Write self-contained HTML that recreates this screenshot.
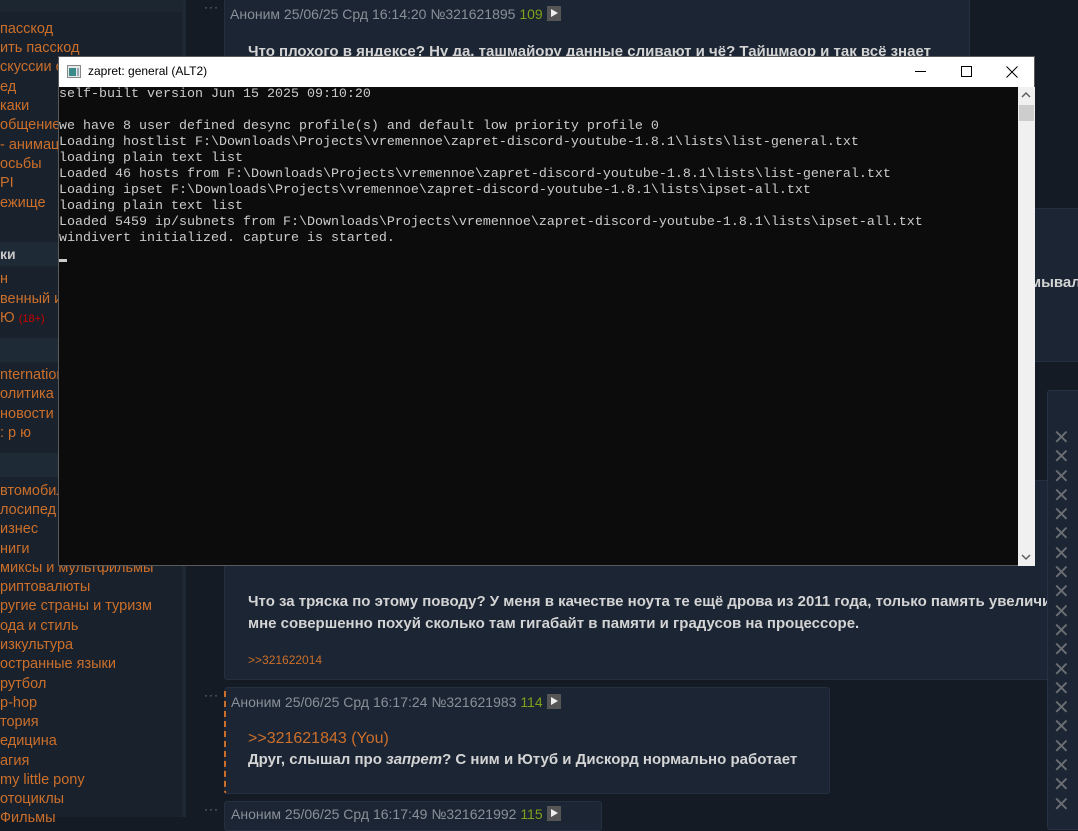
<!DOCTYPE html>
<html><head><meta charset="utf-8"><style>
*{margin:0;padding:0;box-sizing:border-box}
body{width:1078px;height:817px;overflow:hidden;background:#141b24;font-family:"Liberation Sans","DejaVu Sans",sans-serif;position:relative}
.abs{position:absolute}
.side{left:0;top:0;width:186px;height:817px;background:#18212c;border-right:4px solid #1e2834}
.side .it{position:absolute;left:0;font-size:14.5px;color:#cc6f2a;white-space:nowrap;line-height:19px}
.band{position:absolute;left:0;width:182px;height:24px;background:#1f2a37;color:#c8c8c8;font-size:14px;font-weight:bold;line-height:24px}
.post{position:absolute;background:#1b2533;border:1px solid #243040;border-radius:3px}
.hdr{position:absolute;font-size:14px;color:#8a9099;white-space:nowrap}
.hdr .n{color:#7ea21a}
.hdr .pl{display:inline-block;width:14px;height:15px;background:#555;vertical-align:-2px;margin-left:4px;position:relative}
.hdr .pl:after{content:"";position:absolute;left:4px;top:3px;border-left:7px solid #eee;border-top:4.5px solid transparent;border-bottom:4.5px solid transparent}
.txt{position:absolute;font-size:15px;font-weight:bold;color:#d4d4d4;white-space:nowrap;line-height:24px}
.or{color:#cc6f2a}
.dots{position:absolute;color:#7a808a;font-size:12px;letter-spacing:1px}
.win{left:58px;top:56px;width:977px;height:510px;background:#0c0c0c;border:1px solid #5a5a5a}
.tb{position:absolute;left:0;top:0;width:100%;height:30px;background:#fff;font-size:12px;color:#000}
.con{position:absolute;left:0;top:30px;font-family:"Liberation Mono","DejaVu Sans Mono",monospace;font-size:13.33px;line-height:16px;color:#cccccc;white-space:pre}
.x{position:absolute;left:1053px;color:#6a6d72;font-size:20px;font-weight:bold;line-height:19.3px;font-family:"DejaVu Sans",sans-serif}
</style></head><body>
<div class="abs side">
<div class="abs" style="left:0;top:0;width:182px;height:12px;background:#1c2631"></div>
<div class="it" style="top:20px">пасскод</div>
<div class="it" style="top:39px">ить пасскод</div>
<div class="it" style="top:58px">скуссии о</div>
<div class="it" style="top:78px">ед</div>
<div class="it" style="top:97px">каки</div>
<div class="it" style="top:116px">общение</div>
<div class="it" style="top:136px">- анимации</div>
<div class="it" style="top:155px">осьбы</div>
<div class="it" style="top:174px">PI</div>
<div class="it" style="top:194px">ежище</div>
<div class="band" style="top:242px">ки</div>
<div class="it" style="top:270px">н</div>
<div class="it" style="top:290px">венный и</div>
<div class="it" style="top:309px">Ю <span style="color:#c00;font-size:11px">(18+)</span></div>
<div class="band" style="top:338px"></div>
<div class="it" style="top:366px">nternation</div>
<div class="it" style="top:385px">олитика</div>
<div class="it" style="top:405px"> новости</div>
<div class="it" style="top:424px">: р ю</div>
<div class="band" style="top:453px"></div>
<div class="it" style="top:482px">втомобил</div>
<div class="it" style="top:501px">лосипед</div>
<div class="it" style="top:520px">изнес</div>
<div class="it" style="top:540px">ниги</div>
<div class="it" style="top:559px">миксы и мультфильмы</div>
<div class="it" style="top:578px">риптовалюты</div>
<div class="it" style="top:597px">ругие страны и туризм</div>
<div class="it" style="top:617px">ода и стиль</div>
<div class="it" style="top:636px">изкультура</div>
<div class="it" style="top:655px">остранные языки</div>
<div class="it" style="top:675px">рутбол</div>
<div class="it" style="top:694px">p-hop</div>
<div class="it" style="top:713px">тория</div>
<div class="it" style="top:732px">едицина</div>
<div class="it" style="top:752px">агия</div>
<div class="it" style="top:771px">my little pony</div>
<div class="it" style="top:790px">отоциклы</div>
<div class="it" style="top:809px">Фильмы</div>
</div>

<div class="post" style="left:224px;top:-4px;width:746px;height:210px"></div>
<div class="dots" style="left:204px;top:0px">···</div>
<div class="hdr" style="left:230px;top:6px">Аноним 25/06/25 Срд 16:14:20 №321621895 <span class="n">109</span><span class="pl"></span></div>
<div class="txt" style="left:248px;top:40px">Что плохого в яндексе? Ну да, ташмайору данные сливают и чё? Тайщмаор и так всё знает</div>

<div class="post" style="left:210px;top:208px;width:880px;height:154px"></div>
<div class="txt" style="left:1030px;top:271px">мывал</div>

<div class="post" style="left:224px;top:480px;width:870px;height:200px"></div>
<div class="txt" style="left:248px;top:590px">Что за тряска по этому поводу? У меня в качестве ноута те ещё дрова из 2011 года, только память увеличил</div>
<div class="txt" style="left:248px;top:612px">мне совершенно похуй сколько там гигабайт в памяти и градусов на процессоре.</div>
<div class="abs or" style="left:248px;top:653px;font-size:12px">&gt;&gt;321622014</div>

<div class="post" style="left:224px;top:687px;width:606px;height:107px;border-left:2px dashed #cc6f2a"></div>
<div class="dots" style="left:204px;top:688px">···</div>
<div class="hdr" style="left:231px;top:694px">Аноним 25/06/25 Срд 16:17:24 №321621983 <span class="n">114</span><span class="pl"></span></div>
<div class="txt" style="left:248px;top:727px"><span class="or" style="font-weight:normal;font-size:16px">&gt;&gt;321621843 (You)</span></div>
<div class="txt" style="left:248px;top:748px">Друг, слышал про <i>запрет</i>? С ним и Ютуб и Дискорд нормально работает</div>

<div class="post" style="left:224px;top:801px;width:378px;height:30px"></div>
<div class="dots" style="left:204px;top:802px">···</div>
<div class="hdr" style="left:231px;top:806px">Аноним 25/06/25 Срд 16:17:49 №321621992 <span class="n">115</span><span class="pl"></span></div>

<div class="abs" style="left:1047px;top:390px;width:40px;height:440px;background:#1b2533;border:1px solid #263244;border-radius:3px"></div>
<div class="x" style="top:428px">✕<br>✕<br>✕<br>✕<br>✕<br>✕<br>✕<br>✕<br>✕<br>✕<br>✕<br>✕<br>✕<br>✕<br>✕<br>✕<br>✕<br>✕<br>✕<br>✕</div>

<div class="abs win">
<div class="tb">
<svg class="abs" style="left:8px;top:8px" width="14" height="13" viewBox="0 0 14 13"><rect x="0.5" y="0.5" width="13" height="12" fill="#e8e8e8" stroke="#888"/><rect x="2" y="3" width="7" height="8" fill="#3a8a8a"/><rect x="10" y="3" width="2" height="8" fill="#9ab"/></svg>
<div class="abs" style="left:29px;top:7px;font-size:12px">zapret: general (ALT2)</div>
<div class="abs" style="left:856px;top:14px;width:11px;height:1px;background:#000"></div>
<div class="abs" style="left:902px;top:9px;width:11px;height:11px;border:1px solid #000"></div>
<svg class="abs" style="left:947px;top:9px" width="12" height="12"><path d="M0.5 0.5L11.5 11.5M11.5 0.5L0.5 11.5" stroke="#000" stroke-width="1"/></svg>
</div>
<div class="con">self-built version Jun 15 2025 09:10:20

we have 8 user defined desync profile(s) and default low priority profile 0
Loading hostlist F:\Downloads\Projects\vremennoe\zapret-discord-youtube-1.8.1\lists\list-general.txt
loading plain text list
Loaded 46 hosts from F:\Downloads\Projects\vremennoe\zapret-discord-youtube-1.8.1\lists\list-general.txt
Loading ipset F:\Downloads\Projects\vremennoe\zapret-discord-youtube-1.8.1\lists\ipset-all.txt
loading plain text list
Loaded 5459 ip/subnets from F:\Downloads\Projects\vremennoe\zapret-discord-youtube-1.8.1\lists\ipset-all.txt
windivert initialized. capture is started.
</div>
<div class="abs" style="left:0;top:202px;width:8px;height:3px;background:#ccc"></div>
<div class="abs" style="left:959px;top:30px;width:17px;height:479px;background:#f0f0f0"></div>
<div class="abs" style="left:960px;top:48px;width:15px;height:16px;background:#cdcdcd"></div>
<svg class="abs" style="left:962px;top:34px" width="10" height="8"><path d="M1 6L5 2L9 6" stroke="#606060" fill="none" stroke-width="1.5"/></svg>
<svg class="abs" style="left:962px;top:496px" width="10" height="8"><path d="M1 2L5 6L9 2" stroke="#606060" fill="none" stroke-width="1.5"/></svg>
</div>
</body></html>
